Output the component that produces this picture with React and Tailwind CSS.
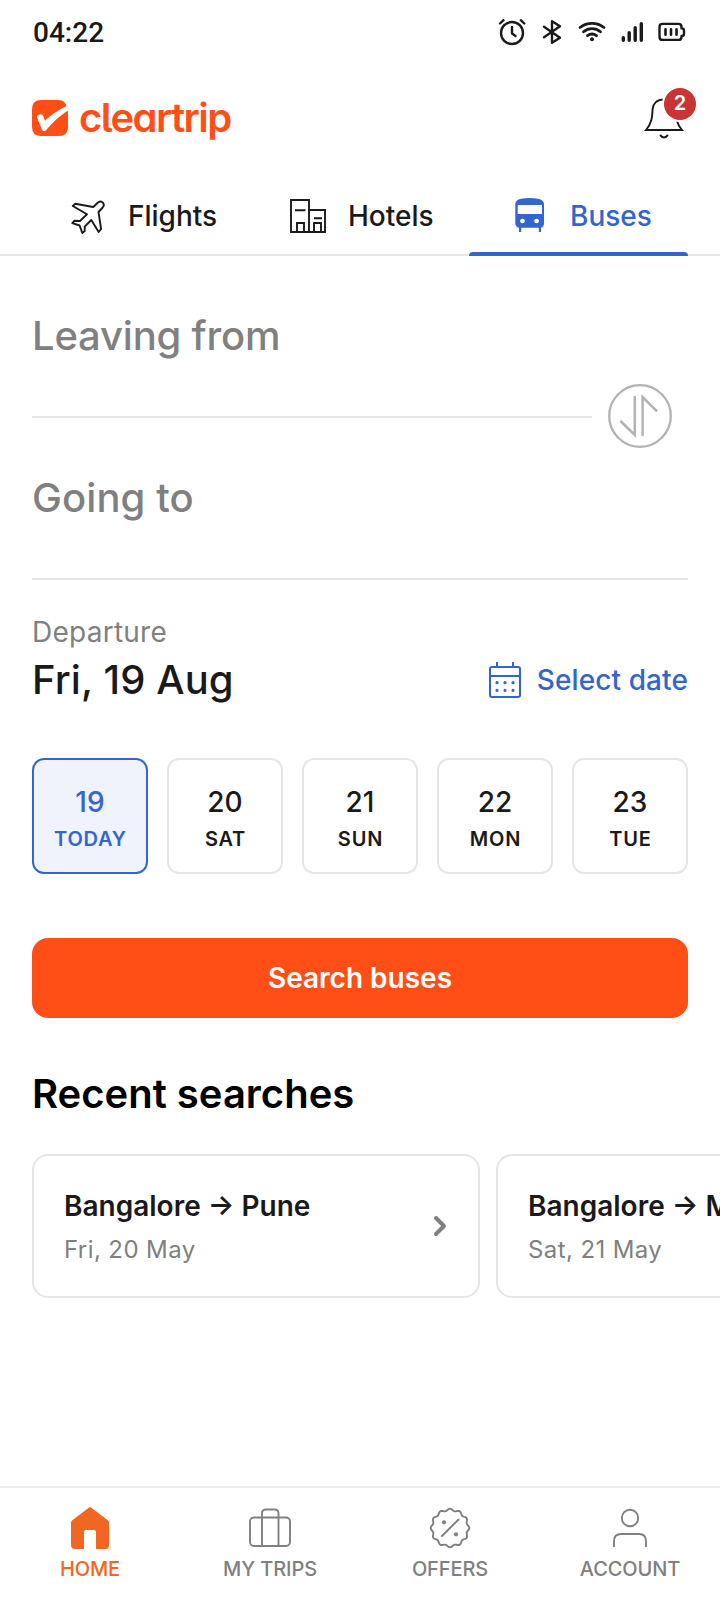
import React, { useState } from 'react'

const StatusIcons = () => (
  <svg width="190" height="30" viewBox="0 0 190 30" fill="none" stroke="#1a1a1a" strokeLinecap="round" strokeLinejoin="round">
    <g strokeWidth="2.4">
      <circle cx="14" cy="16" r="11" />
      <path d="M14 10v6.5l3.5 2.5M2 6.5l3.5-3.3M26.3 6.5l-3.5-3.3" />
    </g>
    <path d="M46 9.7L62 20.7 54 25.8V4.2l8 5.1L46 20.3" strokeWidth="2.4" />
    <g strokeWidth="2.8">
      <path d="M82 10.5c7-5.5 17-5.5 24 0" />
      <path d="M85.5 14.8c5-4.2 12-4.2 17 0" />
      <path d="M89.5 18.7c3-2.2 6-2.2 9 0" />
    </g>
    <circle cx="94" cy="22.300" r="2" fill="#1a1a1a" stroke="none" />
    <path d="M125.3 20.7v2.6M131.2 15.7v7.6M137.2 10.7v12.6M143.3 6.7v16.6" strokeWidth="3.4" />
    <path d="M164.5 6.9h16q3 0 3 3v1.5q2.500 0 2.500 2v3.500q0 2-2.500 2v1q0 3-3 3h-16q-3 0-3-3v-10q0-3 3-3z" strokeWidth="2.4" />
    <path d="M167.5 12.3v5.5M173 12.3v5.5M178.500 12.3v5.5" strokeWidth="2.6" />
  </svg>
)

const Logo = () => (
  <div className="flex items-center gap-[11px] text-[#ff4f17]">
    <svg width="36" height="36" viewBox="0 0 36 36">
      <path d="M9 0h18q5.500 0 7.700 6Q22 12 13 20.700l-2-5.200q-1-1.800-3.500-1-3.200 1-2.500 3L9.700 29q1.500 3.600 4.300 1.300C22 21 29 14.700 36 10.700V27q0 9-9 9H9q-9 0-9-9V9q0-9 9-9z" fill="currentColor" />
    </svg>
    <span className="font-['Inter'] text-[40px] leading-[48px] font-semibold tracking-[-1.55px] [font-feature-settings:'cv11','cv05']">cleartrip</span>
  </div>
)

const PlaneIcon = () => (
  <svg width="36" height="36" viewBox="0 0 36 36" fill="none" stroke="currentColor" strokeWidth="1.9" strokeLinejoin="round">
    <path d="M23.3 9l4.700-4.500q3-2 5 .3 1.700 2.200-.3 4.700L28.500 14l2.600 17-2.400 3L21.300 22l-6.600 6.700V33l-2.400 2-2.700-7.500-7.300-2.400 2-2.300 5.700.2 7-6.700L2.800 8l2.500-2.300z" />
  </svg>
)

const HotelIcon = () => (
  <svg width="38" height="36" viewBox="0 0 38 36" fill="none" stroke="currentColor" strokeWidth="1.9">
    <path d="M2 2h18v32H2zM20 12h16v22H20" />
    <path d="M6 12.2h10.500M25 20.2h8M8 34v-9h7v9M25 34v-9h7v9" />
  </svg>
)

const BusIcon = () => (
  <svg width="31" height="36" viewBox="0 0 31 36" fill="currentColor">
    <path fillRule="evenodd" d="M7 .8Q15.500-.8 24 .8q6 1.200 6 5.500V25q0 4-3 4.800V34h-2.200v-4.200H7.200V34H5v-4.200Q1.300 29 1.300 25V6.300Q1.300 2 7 .8zM3.700 7v9H28V7zM8.500 20.700a2.300 2.300 0 1 0 .01 0zM22.600 20.700a2.300 2.300 0 1 0 .01 0z" />
  </svg>
)

const BellIcon = () => (
  <svg width="40" height="42" viewBox="0 0 40 42" fill="none" stroke="#1a1a1a" strokeWidth="1.9" strokeLinecap="round">
    <path d="M20 2.5C12.5 2.5 9 7 8.600 12 8.200 20 8 26 2 33h36C32 26 31.800 20 31.400 12 31 7 27.500 2.500 20 2.500z" />
    <path d="M16.5 38.5q3.500 4 7 0" />
  </svg>
)

const CalendarIcon = () => (
  <svg width="32" height="37" viewBox="0 0 32 37" fill="none" stroke="currentColor" strokeWidth="2">
    <rect x="1" y="6" width="30" height="30" rx="2" />
    <path d="M1 15h30M8 1v5M24 1v5" />
    <path d="M8 21.7h.01M16 21.7h.01M24 21.7h.01M8 29.3h.01M16 29.3h.01M24 29.3h.01" strokeWidth="3.2" strokeLinecap="round" />
  </svg>
)

const SwapIcon = () => (
  <svg width="64" height="64" viewBox="0 0 64 64" fill="none" stroke="#b3b3b3" strokeWidth="2.300" strokeLinecap="round">
    <circle cx="32" cy="32" r="30.8" />
    <path d="M26.8 13v38L13 37.5M34.6 51V13l13.700 13.700" strokeWidth="2.5" />
  </svg>
)

const HomeIcon = () => (
  <svg width="44" height="44" viewBox="0 0 44 44" fill="currentColor">
    <path d="M21 1.5q1-.8 2 0L40 14.500q1 .8 1 2V39q0 4-4 4h-9V26q0-2-2-2h-8q-2 0-2 2v17H7q-4 0-4-4V16.500q0-1.200 1-2z" />
  </svg>
)

const TripsIcon = () => (
  <svg width="44" height="44" viewBox="0 0 44 44" fill="none" stroke="currentColor" strokeWidth="1.9">
    <rect x="2" y="11.5" width="40" height="28.5" rx="4" />
    <path d="M14 40V7.500q0-4 4-4h8.500q4 0 4 4V40" />
  </svg>
)

// badge outline with twelve scallops
const sealPath = () => {
  const pts = []
  for (let i = 0; i < 180; i++) {
    const a = (i / 180) * Math.PI * 2
    const r = 18.3 + Math.cos(a * 12)
    pts.push(`${(22 + r * Math.sin(a)).toFixed(2)} ${(22 - r * Math.cos(a)).toFixed(2)}`)
  }
  return `M${pts.join('L')}z`
}

const OffersIcon = () => (
  <svg width="44" height="44" viewBox="0 0 44 44" fill="none" stroke="currentColor" strokeWidth="1.9" strokeLinecap="round">
    <path d={sealPath()} />
    <path d="M14 30l16.500-16.500" />
    <circle cx="16" cy="16.3" r="2.1" fill="currentColor" stroke="none" />
    <circle cx="28" cy="28.3" r="2.1" fill="currentColor" stroke="none" />
  </svg>
)

const AccountIcon = () => (
  <svg width="44" height="44" viewBox="0 0 44 44" fill="none" stroke="currentColor" strokeWidth="1.9">
    <circle cx="22" cy="12" r="8.2" />
    <path d="M6 41v-6q0-7 7-7h18q7 0 7 7v6" />
  </svg>
)

const tabs = [
  { name: 'Flights', Icon: PlaneIcon, box: 'w-[218px] pl-[38px] gap-[22px]' },
  { name: 'Hotels', Icon: HotelIcon, box: 'w-[219px] pl-[39px] gap-[21px]' },
  { name: 'Buses', Icon: BusIcon, box: 'w-[219px] pl-[45px] gap-[25px]' },
]

const dates = [
  { day: '19', label: 'TODAY' },
  { day: '20', label: 'SAT' },
  { day: '21', label: 'SUN' },
  { day: '22', label: 'MON' },
  { day: '23', label: 'TUE' },
]

const searches = [
  { from: 'Bangalore', to: 'Pune', date: 'Fri, 20 May' },
  { from: 'Bangalore', to: 'Mumbai', date: 'Sat, 21 May' },
]

const navItems = [
  { label: 'HOME', Icon: HomeIcon },
  { label: 'MY TRIPS', Icon: TripsIcon },
  { label: 'OFFERS', Icon: OffersIcon },
  { label: 'ACCOUNT', Icon: AccountIcon },
]

const App = () => {
  const [tab, setTab] = useState('Buses')
  const [day, setDay] = useState('19')

  return (
    <div className="flex flex-col w-[720px] h-[1600px] overflow-hidden bg-white text-[#1a1a1a] font-['Inter',sans-serif]">
      <div className="flex items-center justify-between h-16 pl-[33px] pr-8">
        <span className="pt-0.5 font-['Roboto'] text-[28px] font-medium">04:22</span>
        <StatusIcons />
      </div>

      <header className="flex items-center justify-between h-[108px] pl-8 pr-9">
        <Logo />
        <button className="relative">
          <BellIcon />
          <span className="absolute left-[20px] -top-[9px] size-8 rounded-full bg-[#c93434] ring-2 ring-white text-white text-[20px] leading-[31px] font-semibold text-center">2</span>
        </button>
      </header>

      <nav className="flex h-[84px] px-8 border-b-2 border-[#e6e6e6]">
        {tabs.map(({ name, Icon, box }) => (
          <button
            key={name}
            onClick={() => setTab(name)}
            className={`relative flex items-center h-[88px] text-[28px] leading-9 font-medium ${box} ${tab === name ? 'text-[#3366cc]' : ''}`}
          >
            <Icon />
            <span>{name}</span>
            {tab === name && <span className="absolute left-0 right-0 top-20 h-1 rounded-t-[4px] bg-[#3366cc]" />}
          </button>
        ))}
      </nav>

      <main className="flex-1 px-8">
        <div className="h-[160px] pt-[56px]">
          <p className="text-[40px] leading-[48px] font-medium tracking-[-0.2px] text-[#808080]">Leaving from</p>
        </div>
        <div className="flex items-center gap-4 h-0">
          <div className="w-[560px] h-0.5 mt-0.5 bg-[#e6e6e6]" />
          <button className="shrink-0"><SwapIcon /></button>
        </div>
        <div className="h-[164px] pt-[58px] border-b-2 border-[#e6e6e6]">
          <p className="text-[40px] leading-[48px] font-medium tracking-[0.1px] text-[#808080]">Going to</p>
        </div>

        <section className="pt-[34px]">
          <p className="text-[28px] leading-9 tracking-[0.25px] text-[#808080]">Departure</p>
          <div className="flex items-center justify-between mt-1.5">
            <p className="text-[40px] leading-[48px] font-medium tracking-[0.1px]">Fri, 19 Aug</p>
            <button className="flex items-center gap-4 pb-px text-[28px] leading-9 font-medium tracking-[0.1px] text-[#3366cc]">
              <CalendarIcon />
              <span className="pt-px">Select date</span>
            </button>
          </div>
        </section>

        <div className="flex gap-[19px] mt-[54px]">
          {dates.map((d) => (
            <button
              key={d.day}
              onClick={() => setDay(d.day)}
              className={`flex flex-col items-center w-[116px] h-[116px] pt-6 border-2 rounded-xl ${day === d.day ? 'border-[#3366cc] bg-[#f0f3fc] text-[#3366cc]' : 'border-[#e6e6e6]'}`}
            >
              <span className="text-[28px] leading-9 font-medium">{d.day}</span>
              <span className="mt-[7px] pl-px text-[20px] leading-6 font-semibold tracking-[0.8px]">{d.label}</span>
            </button>
          ))}
        </div>

        <button className="w-full h-20 mt-16 rounded-2xl bg-[#ff4f17] text-white text-[28px] leading-9 font-semibold">Search buses</button>

        <h2 className="mt-[50px] text-[40px] leading-[52px] font-semibold text-black">Recent searches</h2>
        <div className="flex gap-4 mt-[34px] w-[912px]">
          {searches.map((s) => (
            <div key={s.to} className="flex items-center justify-between w-[448px] h-[144px] pl-[30px] pr-[31px] border-2 border-[#e6e6e6] rounded-2xl">
              <div className="pt-0.5">
                <p className="text-[28px] leading-9 font-semibold">{s.from} → {s.to}</p>
                <p className="mt-2.5 text-[24px] leading-8 tracking-[0.4px] text-[#808080]">{s.date}</p>
              </div>
              <svg width="14" height="22" viewBox="0 0 14 22" fill="none" stroke="#808080" strokeWidth="4" strokeLinecap="round" strokeLinejoin="round">
                <path d="M3 3l8 8-8 8" />
              </svg>
            </div>
          ))}
        </div>
      </main>

      <footer className="flex h-[114px] border-t-2 border-[#ededed]">
        {navItems.map(({ label, Icon }, i) => (
          <button key={label} className={`flex flex-col items-center w-[180px] pt-[18px] ${i === 0 ? 'text-[#f26522]' : 'text-[#808080]'}`}>
            <Icon />
            <span className="mt-[7px] text-[20px] leading-6 font-medium tracking-[-0.1px]">{label}</span>
          </button>
        ))}
      </footer>
    </div>
  )
}

export default App
